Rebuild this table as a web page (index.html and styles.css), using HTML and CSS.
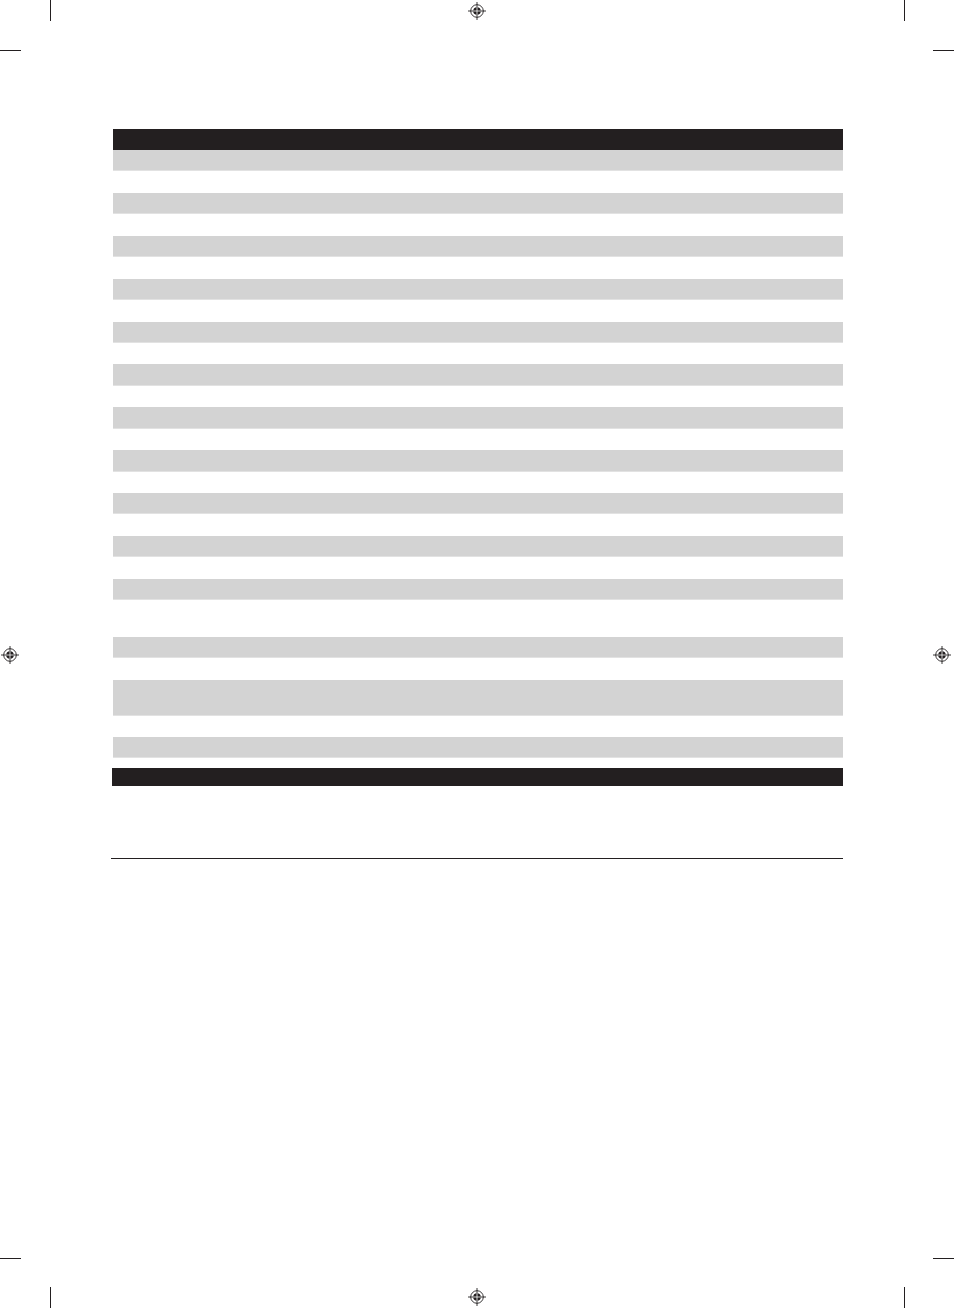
FILE: index.html
```html
<!DOCTYPE html>
<html lang="en">
<head>
<meta charset="utf-8">
<title>Page</title>
<link rel="stylesheet" href="styles.css">
</head>
<body>
<div class="page">
  <span class="crop v tl"></span><span class="crop h tlh"></span>
  <span class="crop v tr"></span><span class="crop h trh"></span>
  <span class="crop v bl"></span><span class="crop h blh"></span>
  <span class="crop v br"></span><span class="crop h brh"></span>

  <svg class="reg reg-top" viewBox="-10 -10 20 20" width="20" height="20"><use href="#regmark"/></svg>
  <svg class="reg reg-bottom" viewBox="-10 -10 20 20" width="20" height="20"><use href="#regmark"/></svg>
  <svg class="reg reg-left" viewBox="-10 -10 20 20" width="20" height="20"><use href="#regmark"/></svg>
  <svg class="reg reg-right" viewBox="-10 -10 20 20" width="20" height="20"><use href="#regmark"/></svg>

  <svg width="0" height="0" class="defs">
    <defs>
      <g id="regmark">
        <circle cx="0" cy="0" r="6.3" fill="none" stroke="#231f20" stroke-width="0.9"/>
        <circle cx="0" cy="0" r="3.8" fill="#231f20"/>
        <line x1="-9" y1="0" x2="9" y2="0" stroke="#231f20" stroke-width="0.9"/>
        <line x1="0" y1="-9" x2="0" y2="9" stroke="#231f20" stroke-width="0.9"/>
        <line x1="-3.8" y1="0" x2="3.8" y2="0" stroke="#fff" stroke-width="0.8"/>
        <line x1="0" y1="-3.8" x2="0" y2="3.8" stroke="#fff" stroke-width="0.8"/>
      </g>
    </defs>
  </svg>

  <main class="content">
    <div class="table">
      <div class="head"></div>
      <div class="row g"></div><div class="row w"></div>
      <div class="row g"></div><div class="row w"></div>
      <div class="row g"></div><div class="row w"></div>
      <div class="row g"></div><div class="row w"></div>
      <div class="row g"></div><div class="row w"></div>
      <div class="row g"></div><div class="row w"></div>
      <div class="row g"></div><div class="row w"></div>
      <div class="row g"></div><div class="row w"></div>
      <div class="row g"></div><div class="row w"></div>
      <div class="row g"></div><div class="row w"></div>
      <div class="row g"></div><div class="row w tall"></div>
      <div class="row g"></div><div class="row w"></div>
      <div class="row g tall"></div><div class="row w"></div>
      <div class="row g"></div><div class="row w short"></div>
      <div class="foot"></div>
    </div>
    <hr class="rule">
  </main>
</div>
</body>
</html>
```

FILE: styles.css
```css
html, body {
  margin: 0;
  padding: 0;
  background: #fff;
  font-family: "Liberation Sans", Arial, sans-serif;
}

.page {
  position: relative;
  width: 954px;
  height: 1308px;
  overflow: hidden;
}

.defs {
  position: absolute;
}

/* crop marks */
.crop {
  position: absolute;
  background: #231f20;
}
.crop.v { width: 1px; height: 21px; }
.crop.h { width: 21px; height: 1px; }
.tl  { left: 50px;  top: 0; }
.tlh { left: 0;     top: 50px; }
.tr  { left: 904px; top: 0; }
.trh { left: 933px; top: 50px; }
.bl  { left: 50px;  top: 1287px; }
.blh { left: 0;     top: 1258px; }
.br  { left: 904px; top: 1287px; }
.brh { left: 933px; top: 1258px; }

/* registration marks */
.reg { position: absolute; }
.reg-top    { left: 467px; top: 1px; }
.reg-bottom { left: 467px; top: 1287px; }
.reg-left   { left: 0;     top: 645px; }
.reg-right  { left: 932px; top: 645px; }

/* content */
.content {
  padding: 129px 0 0 112px;
  width: 731px;
}

.table {
  display: flex;
  flex-direction: column;
}

.head {
  height: 21px;
  margin-left: 0.5px;
  background: #231f20;
}

.row { height: 21.45px; margin-left: 1px; }
.row.g {
  background: #d3d3d3;
  box-shadow: inset 0 -1px 0 #e2e2e2;
}
.row.w { background: #fff; }
.row.w.tall { height: 36.5px; }
.row.g.tall { height: 36px; }
.row.w.short { height: 10px; }

.foot {
  height: 18px;
  background: #231f20;
}

.rule {
  margin: 72px 0 0 -1px;
  border: 0;
  height: 1px;
  background: #231f20;
  width: 732px;
}
```
